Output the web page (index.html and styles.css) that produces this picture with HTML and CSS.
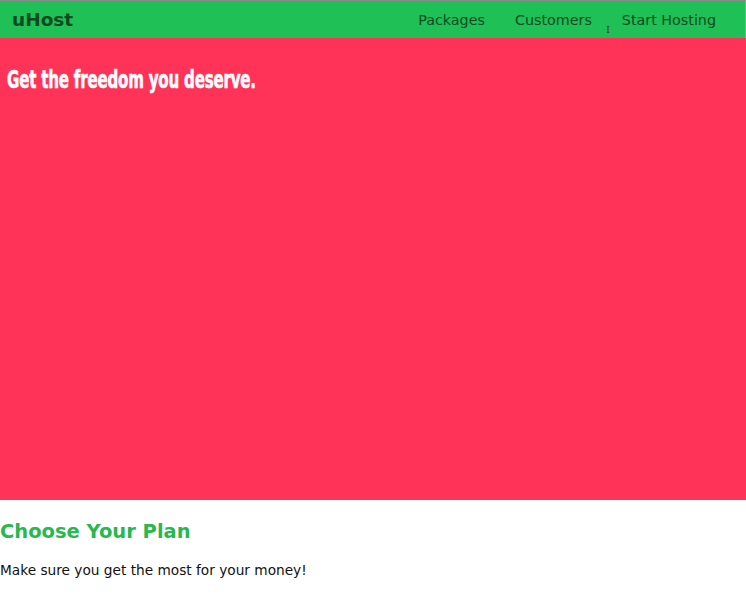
FILE: index.html
```html
<!DOCTYPE html>
<html lang="en">
<head>
<meta charset="UTF-8">
<title>uHost</title>
<link rel="stylesheet" href="styles.css">
</head>
<body>
<header class="main-header">
  <a class="brand" href="#">uHost</a>
  <nav class="main-nav">
    <a class="nav-link" href="#">Packages</a>
    <a class="nav-link" href="#">Customers</a>
    <span class="cursor">I</span>
    <a class="nav-link" href="#">Start Hosting</a>
  </nav>
</header>
<main>
  <section class="overview">
    <h1 class="overview-title">Get the freedom you deserve.</h1>
  </section>
  <section class="plans">
    <h1 class="plans-title">Choose Your Plan</h1>
    <p class="plans-sub">Make sure you get the most for your money!</p>
  </section>
</main>
</body>
</html>
```
FILE: styles.css
```css
html, body {
  margin: 0;
  padding: 0;
  background: #ffffff;
  font-family: "DejaVu Sans", "Open Sans", sans-serif;
}
.main-header {
  display: flex;
  align-items: center;
  justify-content: space-between;
  height: 37px;
  border-top: 1px solid #8a8a8a;
  border-right: 1px solid #9a9a9a;
  background: #1fc055;
  padding: 0 29px 0 12px;
}
.brand {
  color: #0e4a1f;
  font-weight: bold;
  font-size: 18.5px;
  text-decoration: none;
}
.main-nav {
  display: flex;
  align-items: center;
  gap: 30px;
  position: relative;
}
.nav-link {
  color: #0e4a1f;
  text-decoration: none;
  font-size: 14.3px;
}
.cursor {
  position: absolute;
  left: 188px;
  top: 13px;
  font-size: 9px;
  color: #333;
  font-family: "DejaVu Serif", serif;
}
.overview {
  background: #ff3358;
  height: 462px;
  padding: 27px 7px 0;
  box-sizing: border-box;
}
.overview-title {
  margin: 0;
  color: #ffffff;
  font-family: "DejaVu Sans Condensed", "DejaVu Sans", sans-serif;
  font-weight: bold;
  font-size: 25px;
  letter-spacing: -0.3px;
  line-height: 30px;
  -webkit-text-stroke: 0.6px #ffffff;
  transform: scaleX(0.67);
  transform-origin: left center;
  white-space: nowrap;
}
.plans {
  padding: 20px 0 0;
}
.plans-title {
  margin: 0;
  color: #27b84f;
  font-size: 19.5px;
  font-weight: bold;
}
.plans-sub {
  margin: 19px 0 0;
  font-size: 13.7px;
  color: #111;
}
```
